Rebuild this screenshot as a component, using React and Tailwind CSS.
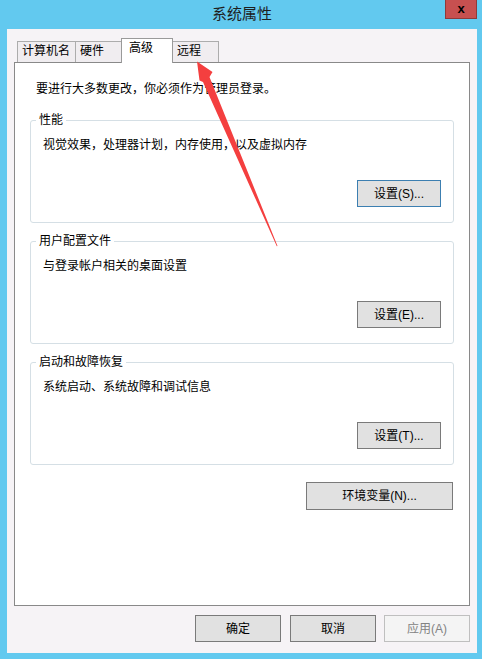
import React from 'react';

const tabs = [
    { label: '计算机名', width: 'w-[59px]' },
    { label: '硬件', width: 'w-[47px]' },
    { label: '高级', width: 'w-[52px]', active: true },
    { label: '远程', width: 'w-[47px]' },
];

const groups = [
    { title: '性能', text: '视觉效果，处理器计划，内存使用，以及虚拟内存', button: '设置(S)...', focused: true },
    { title: '用户配置文件', text: '与登录帐户相关的桌面设置', button: '设置(E)...' },
    { title: '启动和故障恢复', text: '系统启动、系统故障和调试信息', button: '设置(T)...' },
];

function Tab({ label, width, active }) {
    if (active) {
        return (
            <div className={`${width} -ml-px h-[25px] -mb-px relative z-10 bg-white border border-b-0 border-[#9a9a9a] pt-px pl-[7px] leading-[16px] whitespace-nowrap`}>
                {label}
            </div>
        );
    }
    return (
        <div className={`${width} -ml-px first:ml-0 h-[21px] bg-[#f0edf0] border border-b-0 border-[#acacac] pt-px pl-[4px] leading-[16px] whitespace-nowrap`}>
            {label}
        </div>
    );
}

function Button({ children, className = '', focused, disabled }) {
    let look = 'bg-[#e1e1e1] border-[#7a7a7a] text-black';
    if (focused) look = 'bg-[#e1e1e1] border-[#3c7fb1] text-black';
    if (disabled) look = 'bg-[#f4f4f4] border-[#bfbfbf] text-[#838383]';
    return (
        <div className={`h-[27px] border flex items-center justify-center leading-[16px] ${look} ${className}`}>
            {children}
        </div>
    );
}

function Group({ title, text, button, focused, first }) {
    return (
        <fieldset className={`${first ? 'mt-[15px]' : 'mt-[10px]'} mx-[15px] border border-[#d5dfe5] rounded-[3px] pb-[15px] pr-[12px] flex flex-col`}>
            <legend className="ml-[5px] px-[3px] leading-[16px]">{title}</legend>
            <div className="mt-[9px] pl-[12px] leading-[16px]">{text}</div>
            <Button focused={focused} className="mt-[27px] self-end w-[84px]">
                {button}
            </Button>
        </fieldset>
    );
}

export default function App() {
    return (
        <div className="relative w-[482px] h-[659px] bg-[#62c9ef] flex flex-col pl-[7px] pr-[5px] pb-[6px] text-[12px] text-black font-['Liberation_Sans','Noto_Sans_CJK_SC',sans-serif]">
            {/* title bar */}
            <div className="h-[29px] grid grid-cols-[32px_1fr_32px]">
                <div />
                <div className="pt-[4px] text-center text-[15px] leading-[20px] text-[#1e1e1e]">系统属性</div>
                <div className="h-[19px] bg-[#c75050] border border-t-0 border-[#8f3a3a] flex items-center justify-center text-[13px] font-bold leading-none pb-[2px]">
                    x
                </div>
            </div>

            <div className="flex-1 bg-[#f6f3f6] flex flex-col px-[7px] pt-[9px]">
                <div className="h-[24px] flex items-end pl-[3px]">
                    {tabs.map((tab, i) => (
                        <Tab key={i} {...tab} />
                    ))}
                </div>

                <div className="h-[544px] border border-[#898989] bg-white flex flex-col pt-[18px]">
                    <div className="pl-[21px] leading-[16px]">要进行大多数更改，你必须作为管理员登录。</div>
                    {groups.map((g, i) => (
                        <Group key={i} first={i === 0} {...g} />
                    ))}
                    <Button className="mt-[17px] self-end mr-[16px] w-[147px] h-[28px]">环境变量(N)...</Button>
                </div>

                <div className="mt-[9px] flex justify-end">
                    <Button className="w-[86px]">确定</Button>
                    <Button className="w-[86px] ml-[9px]">取消</Button>
                    <Button disabled className="w-[86px] ml-[8px]">应用(A)</Button>
                </div>
            </div>

            {/* red annotation arrow */}
            <svg className="absolute inset-0 pointer-events-none" width="482" height="659" viewBox="0 0 482 659">
                <polygon
                    points="197,61.5 212.5,72 209.5,77 277.5,246 276.8,246.2 203,82 199.5,80.5"
                    fill="#f43f3f"
                />
            </svg>
        </div>
    );
}
